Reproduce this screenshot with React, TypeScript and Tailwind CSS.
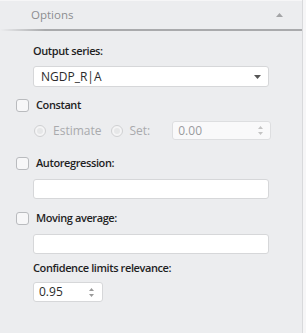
const FONT = { fontFamily: '"Open Sans", "Noto Sans", sans-serif' };

function Checkbox() {
  return (
    <span className="box-border block h-[13px] w-[13px] shrink-0 rounded-[3px] border border-[#b9bbbe] bg-[#f7f7f8]" />
  );
}

function Radio() {
  return (
    <span className="box-border flex h-[12px] w-[12px] shrink-0 items-center justify-center rounded-full border border-[#cfd0d2] bg-[#f4f4f5]">
      <span className="block h-[6px] w-[6px] rounded-full bg-[#e6e7e8]" />
    </span>
  );
}

function Spinner({ light }: { light?: boolean }) {
  const c = light ? "#c4c4c4" : "#9a9a9a";
  return (
    <svg width="7" height="11" viewBox="0 0 7 11" className="shrink-0">
      <path d="M3.5 1 L6 4 L1 4 Z" fill={c} />
      <path d="M1 7 L6 7 L3.5 10 Z" fill={c} />
    </svg>
  );
}

function TextBox() {
  return <div className="box-border h-[20px] w-[236px] rounded-[3px] border border-[#d6d7d9] bg-white" />;
}

function Label({ children }: { children: React.ReactNode }) {
  return <span className="text-[11px] font-semibold tracking-[-0.4px] text-[#1f1f1f]">{children}</span>;
}

export default function App() {
  return (
    <div className="flex h-[333px] w-[306px] bg-[#ecedef] text-[12px] text-[#2b2b2b]" style={FONT}>
      <div className="flex min-w-0 flex-1 flex-col">
        <div className="h-px bg-[#f6f6f7]" />
        <div className="flex h-[28px] items-center justify-between pl-[31px] pr-[19px]">
          <span className="text-[11.5px] text-[#8c8d90]">Options</span>
          <svg width="7" height="4" viewBox="0 0 7 4">
            <path d="M3.5 0 L7 4 L0 4 Z" fill="#a3a4a6" />
          </svg>
        </div>
        <div className="h-[2px] bg-gradient-to-r from-[#ecedef] via-[#a9aaac] via-[15%] to-[#a9aaac]" />

        <div className="flex flex-col pl-[16px]">
          <div className="mt-[12px] pl-[17px] leading-[16px]">
            <Label>Output series:</Label>
          </div>
          <div className="ml-[17px] mt-[7px] box-border flex h-[21px] w-[236px] items-center justify-between rounded-[3px] border border-[#d6d7d9] bg-white pl-[7px] pr-[7px]">
            <span>NGDP_R|A</span>
            <svg width="7" height="4" viewBox="0 0 7 4">
              <path d="M0 0 L7 0 L3.5 4 Z" fill="#555" />
            </svg>
          </div>

          <div className="mt-[10px] flex h-[16px] items-center gap-[7px]">
            <Checkbox />
            <Label>Constant</Label>
          </div>

          <div className="mt-[8px] flex items-center pl-[18px]">
            <Radio />
            <span className="ml-[7px] text-[#a9aaad]">Estimate</span>
            <span className="ml-[9px]">
              <Radio />
            </span>
            <span className="ml-[7px] text-[#a9aaad]">Set:</span>
            <div className="ml-[22px] box-border flex h-[19px] w-[99px] items-center justify-between rounded-[3px] border border-[#dddee0] bg-[#f9f9fa] pl-[5px] pr-[6px]">
              <span className="text-[#9a9b9e]">0.00</span>
              <Spinner light />
            </div>
          </div>

          <div className="mt-[15px] flex h-[16px] items-center gap-[7px]">
            <Checkbox />
            <Label>Autoregression:</Label>
          </div>
          <div className="ml-[17px] mt-[8px]">
            <TextBox />
          </div>

          <div className="mt-[11px] flex h-[16px] items-center gap-[7px]">
            <Checkbox />
            <Label>Moving average:</Label>
          </div>
          <div className="ml-[17px] mt-[8px]">
            <TextBox />
          </div>

          <div className="mt-[6px] pl-[17px] leading-[16px]">
            <Label>Confidence limits relevance:</Label>
          </div>
          <div className="ml-[17px] mt-[6px] box-border flex h-[20px] w-[70px] items-center justify-between rounded-[3px] border border-[#d6d7d9] bg-white pl-[5px] pr-[7px]">
            <span>0.95</span>
            <Spinner />
          </div>
        </div>
      </div>
      <div className="w-px bg-[#d8d9db]" />
      <div className="w-[3px] bg-[#f6f6f7]" />
    </div>
  );
}
